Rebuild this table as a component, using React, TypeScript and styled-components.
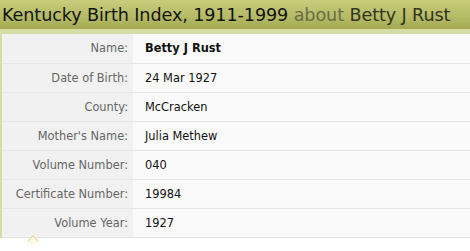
import styled, { createGlobalStyle } from "styled-components";

const GlobalStyle = createGlobalStyle`
    html, body {
        margin: 0;
        padding: 0;
        background: #ffffff;
    }
`

type RecordRow = {
    label: string
    value: string
    strong?: boolean
}

const rows: RecordRow[] = [
    {label: "Name:", value: "Betty J Rust", strong: true},
    {label: "Date of Birth:", value: "24 Mar 1927"},
    {label: "County:", value: "McCracken"},
    {label: "Mother's Name:", value: "Julia Methew"},
    {label: "Volume Number:", value: "040"},
    {label: "Certificate Number:", value: "19984"},
    {label: "Volume Year:", value: "1927"},
]

export default function App() {
    return (
        <Page>
            <GlobalStyle/>
            <Header>
                <Title>
                    Kentucky Birth Index, 1911-1999 <About>about</About> <Person>Betty J Rust</Person>
                </Title>
            </Header>
            <Panel>
                <Table>
                    <tbody>
                    {rows.map((row) => (
                        <Row key={row.label}>
                            <Label>{row.label}</Label>
                            <Value $strong={row.strong}>{row.value}</Value>
                        </Row>
                    ))}
                    </tbody>
                </Table>
            </Panel>
            <Caret/>
        </Page>
    );
}

const Page = styled.div`
    width: 470px;
    height: 251px;
    overflow: hidden;
    position: relative;
`

const Header = styled.div`
    height: 29px;
    padding: 1px 0 0 2px;
    box-sizing: border-box;
    background: linear-gradient(to bottom, #c8cc7c 0%, #b6bb66 55%, #a5aa53 100%);
    display: flex;
    align-items: center;
`

const Title = styled.h1`
    margin: 0;
    font-family: "DejaVu Sans", "Open Sans", sans-serif;
    font-weight: 400;
    font-size: 17.6px;
    letter-spacing: -0.1px;
    color: #141414;
    white-space: nowrap;
`

const About = styled.span`
    color: #6c6c4c;
`

const Person = styled.span`
    color: #33331f;
`

const Panel = styled.div`
    border-top: 5px solid #d6dca6;
    border-left: 2px solid #d6dca6;
`

const Table = styled.table`
    width: 100%;
    border-collapse: collapse;
    font-family: "DejaVu Sans", Verdana, sans-serif;
    font-size: 11.4px;
`

const Row = styled.tr`
    height: 29px;
    border-bottom: 1px solid #e6e6e6;
`

const Label = styled.td`
    width: 126px;
    padding: 0 5px 0 0;
    text-align: right;
    color: #666666;
    background: #f1f1f1;
    white-space: nowrap;
`

const Value = styled.td<{ $strong?: boolean }>`
    padding: 0 0 0 12px;
    color: #111111;
    background: #fafafa;
    font-weight: ${(p) => (p.$strong ? 700 : 400)};
`

const Caret = styled.div`
    position: absolute;
    left: 29px;
    top: 237px;
    width: 7px;
    height: 7px;
    border-left: 1px solid #e8d890;
    border-top: 1px solid #e8d890;
    transform: rotate(45deg);
    background: #fffbe8;
`
